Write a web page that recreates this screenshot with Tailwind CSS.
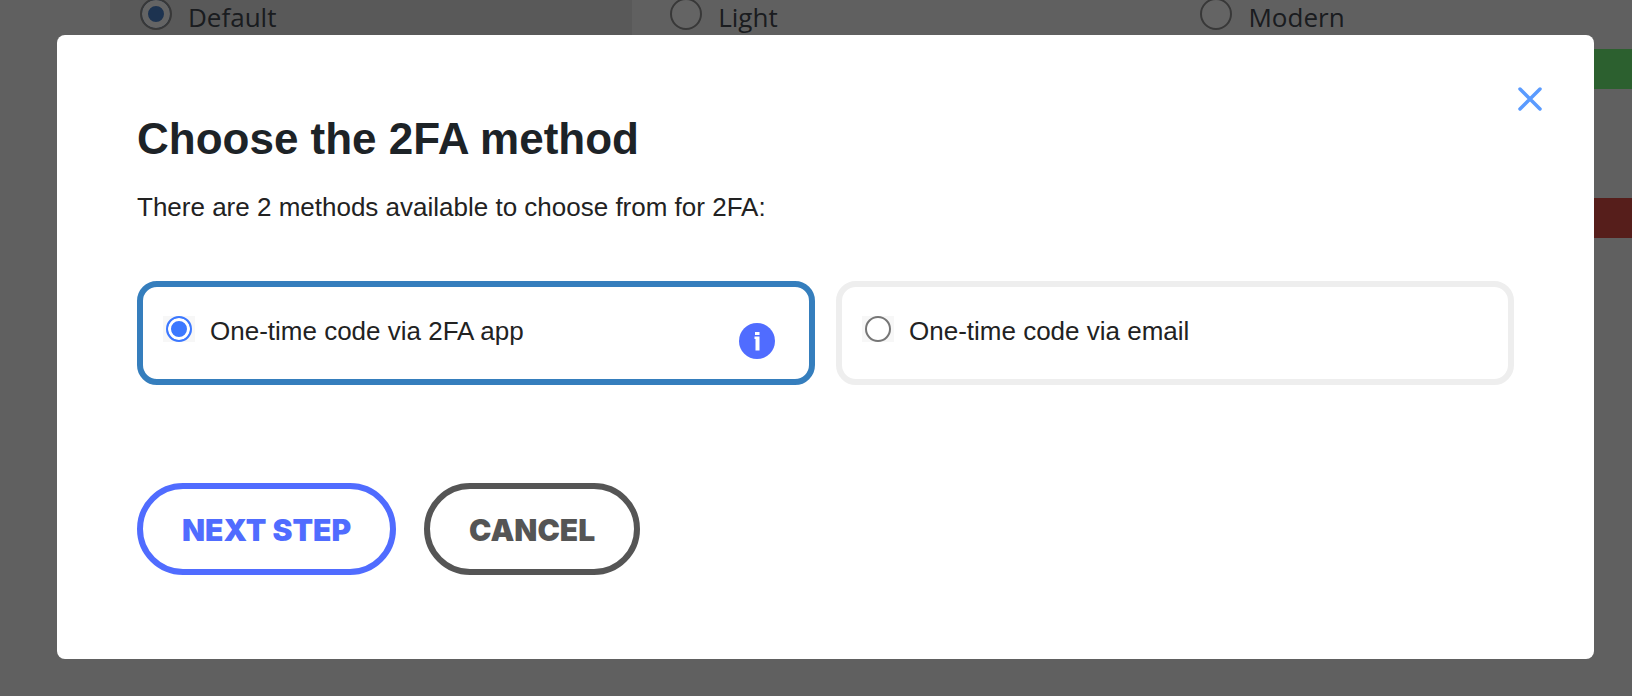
<!DOCTYPE html>
<html lang="en">
<head>
  <meta charset="UTF-8">
  <meta name="viewport" content="width=device-width, initial-scale=1.0">
  <title>Choose the 2FA method</title>
  <script src="https://cdn.jsdelivr.net/npm/@tailwindcss/browser@4"></script>
</head>
<body class="bg-[#f0f0f0] h-screen overflow-hidden font-['Liberation_Sans',Arial,sans-serif]">

  <!-- Settings page behind the dialog -->
  <main class="overflow-hidden">
    <div class="flex gap-2 pl-[110px] font-['Open_Sans',sans-serif] text-[26px] leading-[34px] text-[#41464e]">
      <label class="flex w-[32vw] shrink-0 items-start gap-4 bg-[#dedede] pl-[30px] h-[49px]">
        <input type="radio" name="theme" checked class="appearance-none size-8 -mt-0.5 shrink-0 rounded-full border-2 border-[#8c8c8c] bg-[#fafafa] checked:bg-[#4a80c8] checked:shadow-[inset_0_0_0_6px_#fafafa]">
        Default
      </label>
      <label class="flex w-[32vw] shrink-0 items-start gap-4 pl-[30px]">
        <input type="radio" name="theme" class="appearance-none size-8 -mt-0.5 shrink-0 rounded-full border-2 border-[#8c8c8c] bg-[#fafafa]">
        Light
      </label>
      <label class="flex w-[32vw] shrink-0 items-start gap-4 pl-[30px]">
        <input type="radio" name="theme" class="appearance-none size-8 -mt-0.5 shrink-0 rounded-full border-2 border-[#8c8c8c] bg-[#fafafa]">
        Modern
      </label>
    </div>
    <div class="ml-auto w-1/4 h-10 bg-[#6ef076]"></div>
    <div class="ml-auto mt-[109px] w-1/4 h-10 bg-[#d74b44]"></div>
  </main>

  <!-- Overlay -->
  <div class="fixed inset-0 bg-black/60 pt-[35px] pl-[57px] pr-[38px]">
    <div role="dialog" aria-modal="true" aria-labelledby="title" class="relative rounded-lg bg-white px-20 pt-20 pb-[84px] text-[#222]">
      <button type="button" aria-label="Close" class="absolute right-[52px] top-[52px]">
        <svg class="size-6" viewBox="0 0 24 24" fill="none" stroke="#5a9bff" stroke-width="3.500" stroke-linecap="round">
          <path d="M2 2l20 20M22 2L2 22" />
        </svg>
      </button>

      <h1 id="title" class="text-[44px] leading-[48px] font-bold text-[#1d2327]">Choose the 2FA method</h1>
      <p class="mt-6 text-[26px] leading-10">There are 2 methods available to choose from for 2FA:</p>

      <form>
        <!-- Methods -->
        <div class="mt-[54px] grid grid-cols-2 gap-[21px] text-[26px] leading-10">
          <div class="flex items-start rounded-[20px] border-6 border-[#357ebd] pt-6 pb-5 pl-5 pr-[34px]">
            <label class="flex flex-1 items-start gap-[15px]">
              <span class="mt-[5px] flex h-[26px] w-8 justify-center bg-[#f7f7f7]">
                <input type="radio" name="method" value="totp" checked class="appearance-none size-[26px] rounded-full border-2 border-[#767676] bg-white checked:border-[#3c78ff] checked:bg-[#3c78ff] checked:shadow-[inset_0_0_0_3px_#fff]">
              </span>
              One-time code via 2FA app
            </label>
            <button type="button" aria-label="More info" class="mt-3">
              <svg class="size-9" viewBox="0 0 36 36">
                <circle cx="18" cy="18" r="18" fill="#506cff" />
                <path d="M16 9h4.500v3h-4.500zM15.500 13.500h5v14h-4v-11.500h-1z" fill="#fff" />
              </svg>
            </button>
          </div>
          <div class="flex items-start rounded-[20px] border-6 border-[#eee] pt-6 pb-5 pl-5 pr-[34px]">
            <label class="flex flex-1 items-start gap-[15px]">
              <span class="mt-[5px] flex h-[26px] w-8 justify-center bg-[#f7f7f7]">
                <input type="radio" name="method" value="email" class="appearance-none size-[26px] rounded-full border-2 border-[#767676] bg-white checked:border-[#3c78ff] checked:bg-[#3c78ff] checked:shadow-[inset_0_0_0_3px_#fff]">
              </span>
              One-time code via email
            </label>
          </div>
        </div>

        <!-- Actions -->
        <div class="mt-[98px] flex gap-7 font-['Arial_Black','Inter',sans-serif] text-[30px] leading-10 font-black">
          <button type="button" class="rounded-full border-6 border-[#506cff] px-[39px] pt-[21px] pb-[19px] text-[#506cff]">NEXT STEP</button>
          <button type="button" class="rounded-full border-6 border-[#555] px-[39px] pt-[21px] pb-[19px] text-[#555]">CANCEL</button>
        </div>
      </form>
    </div>
  </div>
</body>
</html>
